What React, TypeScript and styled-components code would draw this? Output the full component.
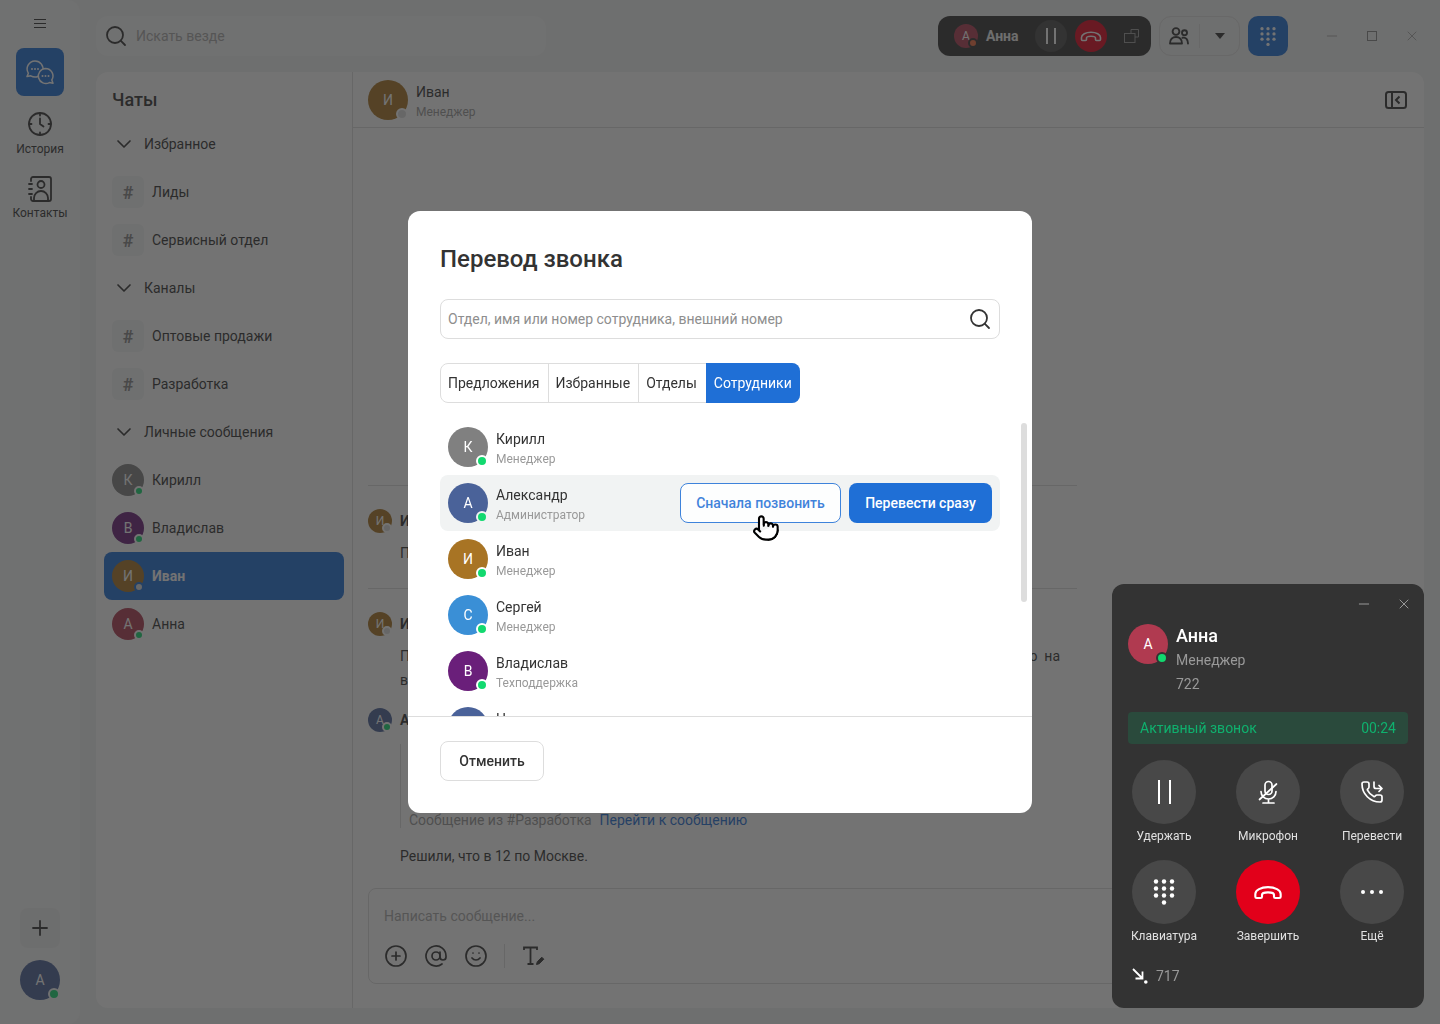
import { ReactNode } from "react"
import styled, { createGlobalStyle } from "styled-components"
import { AtSign, ChevronDown, CirclePlus, Minus, Plus, Pointer, Search, Smile, X } from "lucide-react"

const AVATAR_COLORS: Record<string, string> = {
  gray: "#808080",
  blue: "#4a6299",
  brown: "#a87424",
  sky: "#3a8fd6",
  purple: "#6a1f7a",
  red: "#b03a50",
}

const EMPLOYEES = [
  { letter: "К", name: "Кирилл", role: "Менеджер", color: "gray" },
  { letter: "А", name: "Александр", role: "Администратор", color: "blue", hovered: true },
  { letter: "И", name: "Иван", role: "Менеджер", color: "brown" },
  { letter: "С", name: "Сергей", role: "Менеджер", color: "sky" },
  { letter: "В", name: "Владислав", role: "Техподдержка", color: "purple" },
  { letter: "Н", name: "Никита", role: "Менеджер", color: "blue" },
]

const GlobalStyle = createGlobalStyle`
  html, body {
    margin: 0;
    overflow: hidden;
  }

  body {
    font-family: Roboto, "Liberation Sans", sans-serif;
    color: #333;
    background: #f0f2f2;
  }

  * {
    box-sizing: border-box;
  }
`

function HangupIcon({ size }: { size: number }) {
  return (
    <svg width={size} height={size} viewBox="0 0 24 24" fill="none" stroke="currentColor" strokeWidth="1.6" strokeLinejoin="round">
      <path d="M2.5 15.5v-2c0-2.9 4.2-5.2 9.500-5.200s9.500 2.300 9.500 5.200v2a1 1 0 0 1-1 1h-3a1 1 0 0 1-1-1v-1.400c0-1-2-1.800-4.500-1.800s-4.500.8-4.500 1.800v1.400a1 1 0 0 1-1 1h-3a1 1 0 0 1-1-1z" />
    </svg>
  )
}

function DialIcon({ width }: { width: number }) {
  const rows = [3.5, 10.5, 17.5]
  return (
    <svg width={width} height={(width * 28) / 24} viewBox="0 0 24 28" fill="currentColor">
      {rows.map((cy) =>
        [4, 12, 20].map((cx) => <circle key={`${cx}-${cy}`} cx={cx} cy={cy} r="2.200" />),
      )}
      <circle cx="12" cy="24.500" r="2.200" />
    </svg>
  )
}

function ChatsIcon() {
  return (
    <svg width="32" height="32" viewBox="0 0 32 32" fill="#1f6fd6" stroke="#fff" strokeWidth="1.5" strokeLinejoin="round">
      <path d="M11 5a8 8 0 1 1-4.200 14.800L3 20.500l1.400-3.200A8 8 0 0 1 11 5z" />
      <path d="M21.500 12.500a7.500 7.500 0 0 1 6.300 11.500l1.200 3.300-3.600-.7a7.500 7.500 0 1 1-3.900-14.100z" />
      <g fill="#fff" stroke="none">
        <circle cx="8" cy="13" r="1" />
        <circle cx="11" cy="13" r="1" />
        <circle cx="14" cy="13" r="1" />
        <circle cx="18.500" cy="20" r="1" />
        <circle cx="21.500" cy="20" r="1" />
        <circle cx="24.500" cy="20" r="1" />
      </g>
    </svg>
  )
}

function HistoryIcon() {
  return (
    <svg width="24" height="24" viewBox="0 0 24 24" fill="none" stroke="currentColor" strokeWidth="1.800" strokeLinecap="round" strokeLinejoin="round">
      <circle cx="12" cy="12" r="11" />
      <path d="M12 1v2.500M12 20.500V23M1 12h2.500M20.500 12H23M12 6.500V12l3.500 2.500" />
    </svg>
  )
}

function ContactsIcon() {
  return (
    <svg width="24" height="26" viewBox="0 0 24 26" fill="none" stroke="currentColor" strokeWidth="1.800" strokeLinecap="round">
      <path d="M3 5V3a2 2 0 0 1 2-2h16a2 2 0 0 1 2 2v20a2 2 0 0 1-2 2H5a2 2 0 0 1-2-2v-2" />
      <path d="M1 8h3M1 13h3M1 18h3" />
      <circle cx="13" cy="8.500" r="3.500" />
      <path d="M6 25v-3a7 7 0 0 1 14 0v3" />
    </svg>
  )
}

function MicMutedIcon() {
  return (
    <svg width="24" height="24" viewBox="0 0 24 24" fill="none" stroke="currentColor" strokeWidth="1.700" strokeLinecap="round">
      <rect x="9" y="1.500" width="7" height="13" rx="3.500" />
      <path d="M5 11.500a7.500 7.500 0 0 0 15 0M12.500 19v4M7 23h11" />
      <path d="M3.500 19.500L20.500 4" />
    </svg>
  )
}

function TransferIcon() {
  return (
    <svg width="24" height="24" viewBox="0 0 24 24" fill="none" stroke="currentColor" strokeWidth="1.700" strokeLinecap="round" strokeLinejoin="round">
      <path d="M13.832 16.568a1 1 0 0 0 1.213-.303l.355-.465A2 2 0 0 1 17 15h3a2 2 0 0 1 2 2v3a2 2 0 0 1-2 2A18 18 0 0 1 2 4a2 2 0 0 1 2-2h3a2 2 0 0 1 2 2v3a2 2 0 0 1-.8 1.600l-.468.351a1 1 0 0 0-.292 1.233 14 14 0 0 0 6.392 6.384" />
      <path d="M14 2v4.500a2 2 0 0 0 2 2h6M19 5.500l3 3-3 3" />
    </svg>
  )
}

function PeopleIcon() {
  return (
    <svg width="20" height="18" viewBox="0 0 20 18" fill="none" stroke="currentColor" strokeWidth="1.900" strokeLinecap="round">
      <circle cx="7" cy="4.500" r="3.400" />
      <circle cx="15.500" cy="5.800" r="2.500" />
      <path d="M1 16.500c0-4 2.400-6.500 6-6.500s6 2.500 6 6.500M13.500 10.800c3.500-.8 5.500 2 5.500 5.700M1 16.500h12" />
    </svg>
  )
}

function CopyIcon() {
  return (
    <svg width="15" height="14" viewBox="0 0 15 14" fill="none" stroke="#999" strokeWidth="1">
      <rect x="0.500" y="4.500" width="10.500" height="9" />
      <path d="M7 4.500V.5h7.500V8H11" />
    </svg>
  )
}

function IncomingIcon() {
  return (
    <svg width="16" height="16" viewBox="0 0 16 16" fill="none" stroke="#fff" strokeWidth="1.800">
      <path d="M1 1l9.500 9.500M10.500 3.500v7h-7" />
      <circle cx="13.800" cy="14" r="1.800" fill="#fff" stroke="none" />
    </svg>
  )
}

function TextStyleIcon() {
  return (
    <svg width="24" height="24" viewBox="0 0 24 24" fill="none" stroke="currentColor" strokeWidth="1.800">
      <path d="M3 6V3.500h13V6M9.500 3.500V20M6.500 20h6" />
      <path d="M15.500 20.500l.8-2.800 4.500-4.500 2 2-4.500 4.500z" fill="currentColor" strokeWidth="1" />
    </svg>
  )
}

function CollapseIcon() {
  return (
    <svg width="22" height="20" viewBox="0 0 22 20" fill="none" stroke="currentColor" strokeWidth="2">
      <rect x="1" y="2" width="20" height="16" rx="2.500" />
      <path d="M7 2v16M14.500 6.500L11 10l3.500 3.500" />
    </svg>
  )
}

function Avatar({
  letter,
  color,
  size,
  status,
  ring,
}: {
  letter: string
  color: string
  size: number
  status?: string
  ring?: string
}) {
  return (
    <AvatarCircle $size={size} $color={AVATAR_COLORS[color]}>
      {letter}
      {status && <StatusDot $size={size} $status={status} $ring={ring ?? "#fff"} />}
    </AvatarCircle>
  )
}

function SideRow({ children, selected }: { children: ReactNode; selected?: boolean }) {
  return <SideRowBox $selected={selected}>{children}</SideRowBox>
}

function CallAction({ label, icon, danger }: { label: string; icon: ReactNode; danger?: boolean }) {
  return (
    <ActionCell>
      <ActionCircle $danger={danger}>{icon}</ActionCircle>
      <ActionLabel>{label}</ActionLabel>
    </ActionCell>
  )
}

export default function App() {
  return (
    <>
      <GlobalStyle />
      <Page>
        <Rail>
          <MenuButton>
            <span />
            <span />
            <span />
          </MenuButton>
          <ChatsTile>
            <ChatsIcon />
          </ChatsTile>
          <NavItem>
            <NavIcon>
              <HistoryIcon />
            </NavIcon>
            <NavLabel>История</NavLabel>
          </NavItem>
          <NavItem>
            <NavIcon>
              <ContactsIcon />
            </NavIcon>
            <NavLabel>Контакты</NavLabel>
          </NavItem>
          <RailBottom>
            <AddTile>
              <Plus size={24} strokeWidth={1.8} />
            </AddTile>
            <Avatar letter="А" color="blue" size={40} status="online" ring="#f7f8f8" />
          </RailBottom>
        </Rail>

        <Main>
          <TopBar>
            <SearchBox>
              <Search size={24} strokeWidth={1.8} color="#333" />
              Искать везде
            </SearchBox>
            <CallPill>
              <Avatar letter="А" color="red" size={24} status="busy" ring="#333" />
              <PillName>Анна</PillName>
              <PillRound>
                <PauseBars $height={16} $gap={6} />
              </PillRound>
              <PillRound $danger>
                <HangupIcon size={24} />
              </PillRound>
              <CopySlot>
                <CopyIcon />
              </CopySlot>
            </CallPill>
            <GroupButton>
              <PeopleIcon />
              <GroupDivider />
              <Caret />
            </GroupButton>
            <DialTile>
              <DialIcon width={18} />
            </DialTile>
            <WindowControls>
              <Minus size={16} strokeWidth={1} />
              <MaxBox />
              <X size={16} strokeWidth={1} />
            </WindowControls>
          </TopBar>

          <Panel>
            <ChatList>
              <ListTitle>Чаты</ListTitle>
              <SideRow>
                <ChevronSlot><ChevronDown size={24} strokeWidth={1.7} /></ChevronSlot>
                Избранное
              </SideRow>
              <SideRow><HashTile>#</HashTile>Лиды</SideRow>
              <SideRow><HashTile>#</HashTile>Сервисный отдел</SideRow>
              <SideRow>
                <ChevronSlot><ChevronDown size={24} strokeWidth={1.7} /></ChevronSlot>
                Каналы
              </SideRow>
              <SideRow><HashTile>#</HashTile>Оптовые продажи</SideRow>
              <SideRow><HashTile>#</HashTile>Разработка</SideRow>
              <SideRow>
                <ChevronSlot><ChevronDown size={24} strokeWidth={1.7} /></ChevronSlot>
                Личные сообщения
              </SideRow>
              <SideRow><Avatar letter="К" color="gray" size={32} status="online" />Кирилл</SideRow>
              <SideRow><Avatar letter="В" color="purple" size={32} status="online" />Владислав</SideRow>
              <SideRow selected><Avatar letter="И" color="brown" size={32} status="away" ring="#1f6fd6" />Иван</SideRow>
              <SideRow><Avatar letter="А" color="red" size={32} status="online" />Анна</SideRow>
            </ChatList>

            <ChatPane>
              <ChatHeader>
                <Avatar letter="И" color="brown" size={40} status="away" />
                <PersonText>
                  <PersonName>Иван</PersonName>
                  <PersonRole>Менеджер</PersonRole>
                </PersonText>
                <HeaderAction>
                  <CollapseIcon />
                </HeaderAction>
              </ChatHeader>

              <Feed>
                <FeedDivider />
                <MessageHead>
                  <Avatar letter="И" color="brown" size={24} status="away" />
                  <MessageAuthor>Иван</MessageAuthor>
                </MessageHead>
                <MessageBody>Привет! Когда будет созвон?</MessageBody>
                <FeedDivider />
                <MessageHead>
                  <Avatar letter="И" color="brown" size={24} status="away" />
                  <MessageAuthor>Иван</MessageAuthor>
                </MessageHead>
                <MessageWide>Подскажите, пожалуйста, в какое время клиенту будет удобно созвониться и обсудить это на</MessageWide>
                <MessageBody>встрече.</MessageBody>
                <ThirdHead>
                  <Avatar letter="А" color="blue" size={24} status="online" />
                  <MessageAuthor>Александр</MessageAuthor>
                </ThirdHead>
                <Quote>
                  Сообщение из #Разработка
                  <QuoteLink>Перейти к сообщению</QuoteLink>
                </Quote>
                <MessageBody>Решили, что в 12 по Москве.</MessageBody>
              </Feed>

              <Composer>
                <ComposerHint>Написать сообщение...</ComposerHint>
                <ComposerTools>
                  <CirclePlus size={24} strokeWidth={1.7} />
                  <AtSign size={24} strokeWidth={1.7} />
                  <Smile size={24} strokeWidth={1.7} />
                  <ToolDivider />
                  <TextStyleIcon />
                </ComposerTools>
              </Composer>
            </ChatPane>
          </Panel>
        </Main>
      </Page>

      <Overlay>
        <Modal>
          <ModalTitle>Перевод звонка</ModalTitle>
          <ModalSearch>
            Отдел, имя или номер сотрудника, внешний номер
            <Search size={24} strokeWidth={1.8} color="#333" />
          </ModalSearch>
          <Tabs>
            <Tab>Предложения</Tab>
            <Tab>Избранные</Tab>
            <Tab>Отделы</Tab>
            <Tab $active>Сотрудники</Tab>
          </Tabs>
          <EmployeeList>
            {EMPLOYEES.map((person) => (
              <EmployeeRow key={person.name} $hovered={person.hovered}>
                <Avatar letter={person.letter} color={person.color} size={40} status="online" ring={person.hovered ? "#f1f3f3" : "#fff"} />
                <PersonText>
                  <PersonName>{person.name}</PersonName>
                  <PersonRole>{person.role}</PersonRole>
                </PersonText>
                {person.hovered && (
                  <RowActions>
                    <OutlineButton>Сначала позвонить</OutlineButton>
                    <SolidButton>Перевести сразу</SolidButton>
                    <HandCursor>
                      <Pointer size={28} strokeWidth={1.8} fill="#fff" color="#000" />
                    </HandCursor>
                  </RowActions>
                )}
              </EmployeeRow>
            ))}
            <ScrollThumb />
          </EmployeeList>
          <ModalFooter>
            <CancelButton>Отменить</CancelButton>
          </ModalFooter>
        </Modal>

        <CallWidget>
          <WidgetHead>
            <Minus size={16} strokeWidth={1} />
            <X size={16} strokeWidth={1} />
          </WidgetHead>
          <CallerInfo>
            <Avatar letter="А" color="red" size={40} status="online" ring="#333" />
            <CallerText>
              <CallerName>Анна</CallerName>
              <CallerMeta>Менеджер</CallerMeta>
              <CallerMeta>722</CallerMeta>
            </CallerText>
          </CallerInfo>
          <StatusBar>
            <span>Активный звонок</span>
            <span>00:24</span>
          </StatusBar>
          <ActionGrid>
            <CallAction label="Удержать" icon={<PauseBars $height={24} $gap={9} />} />
            <CallAction label="Микрофон" icon={<MicMutedIcon />} />
            <CallAction label="Перевести" icon={<TransferIcon />} />
            <CallAction label="Клавиатура" icon={<DialIcon width={24} />} />
            <CallAction label="Завершить" icon={<HangupIcon size={32} />} danger />
            <CallAction label="Ещё" icon={<MoreDots><i /><i /><i /></MoreDots>} />
          </ActionGrid>
          <WidgetFooter>
            <IncomingIcon />
            717
          </WidgetFooter>
        </CallWidget>
      </Overlay>
    </>
  )
}

const Page = styled.div`
  display: flex;
  width: 1440px;
  height: 1024px;
`

const Rail = styled.aside`
  display: flex;
  flex-direction: column;
  align-items: center;
  width: 80px;
  padding: 8px 0 24px;
  background: #f7f8f8;
  border-radius: 0 12px 12px 0;
`

const MenuButton = styled.div`
  display: flex;
  flex-direction: column;
  justify-content: center;
  gap: 3px;
  width: 12px;
  height: 30px;
  margin-bottom: 10px;

  & > span {
    height: 1px;
    background: #333;
  }
`

const ChatsTile = styled.div`
  display: flex;
  align-items: center;
  justify-content: center;
  width: 48px;
  height: 48px;
  margin-bottom: 8px;
  border-radius: 8px;
  background: #1f6fd6;
`

const NavItem = styled.div`
  display: flex;
  flex-direction: column;
  align-items: center;
  gap: 5px;
  height: 64px;
  padding-top: 8px;
  color: #333;
`

const NavIcon = styled.div`
  display: flex;
  height: 24px;
`

const NavLabel = styled.span`
  font-size: 12px;
  line-height: 16px;
`

const RailBottom = styled.div`
  display: flex;
  flex-direction: column;
  align-items: center;
  gap: 12px;
  margin-top: auto;
`

const AddTile = styled.div`
  display: flex;
  align-items: center;
  justify-content: center;
  width: 40px;
  height: 40px;
  border-radius: 8px;
  background: #eef0f0;
`

const AvatarCircle = styled.div<{ $size: number; $color: string }>`
  position: relative;
  flex: none;
  display: flex;
  align-items: center;
  justify-content: center;
  width: ${(p) => p.$size}px;
  height: ${(p) => p.$size}px;
  border-radius: 50%;
  background: ${(p) => p.$color};
  color: #fff;
  font-size: ${(p) => (p.$size > 24 ? 14 : 12)}px;
  font-weight: 400;
`

const StatusDot = styled.span<{ $size: number; $status: string; $ring: string }>`
  position: absolute;
  right: 0;
  bottom: 0;
  width: ${(p) => (p.$size >= 40 ? 12 : 10)}px;
  height: ${(p) => (p.$size >= 40 ? 12 : 10)}px;
  border: 2px solid ${(p) => p.$ring};
  border-radius: 50%;
  background: ${(p) =>
    p.$status === "online" ? "#12d96f" : p.$status === "busy" ? "#f26a3c" : "#dcdcdc"};
`

const Main = styled.main`
  flex: 1;
  display: flex;
  flex-direction: column;
  gap: 16px;
  min-width: 0;
  padding: 16px;
`

const TopBar = styled.header`
  display: flex;
  align-items: center;
  gap: 8px;
  height: 40px;
`

const SearchBox = styled.div`
  display: flex;
  align-items: center;
  gap: 8px;
  width: 450px;
  height: 40px;
  margin-right: auto;
  padding: 0 8px;
  border-radius: 12px;
  background: #f7f8f8;
  font-size: 14px;
  color: #aaa;
`

const CallPill = styled.div`
  display: flex;
  align-items: center;
  width: 213px;
  height: 40px;
  padding: 0 12px 0 16px;
  border-radius: 12px;
  background: #333;
  color: #fff;
`

const PillName = styled.span`
  width: 33px;
  margin: 0 16px 0 8px;
  font-size: 14px;
  font-weight: 700;
  color: #f0f0f0;
`

const PillRound = styled.div<{ $danger?: boolean }>`
  display: flex;
  align-items: center;
  justify-content: center;
  width: 32px;
  height: 32px;
  margin-right: 8px;
  border-radius: 50%;
  background: ${(p) => (p.$danger ? "#e2001a" : "#484848")};
  color: #fff;
`

const PauseBars = styled.div<{ $height: number; $gap: number }>`
  width: ${(p) => p.$gap + 4}px;
  height: ${(p) => p.$height}px;
  border-left: 2px solid #fff;
  border-right: 2px solid #fff;
`

const CopySlot = styled.div`
  display: flex;
  margin-left: 9px;
`

const GroupButton = styled.div`
  display: flex;
  align-items: center;
  width: 81px;
  height: 40px;
  padding-left: 9px;
  border: 1px solid #dedede;
  border-radius: 12px;
  color: #333;
`

const GroupDivider = styled.div`
  width: 1px;
  height: 24px;
  margin: 0 15px 0 10px;
  background: #dedede;
`

const Caret = styled.div`
  width: 0;
  height: 0;
  border-left: 5.500px solid transparent;
  border-right: 5.500px solid transparent;
  border-top: 6px solid #333;
`

const DialTile = styled.div`
  display: flex;
  align-items: center;
  justify-content: center;
  width: 40px;
  height: 40px;
  border-radius: 10px;
  background: #1f6fd6;
  color: #fff;
`

const WindowControls = styled.div`
  display: flex;
  align-items: center;
  gap: 24px;
  margin-left: 28px;
  padding-right: 4px;
  color: #888;
`

const MaxBox = styled.div`
  width: 10px;
  height: 10px;
  margin: 0 3px;
  border: 1px solid #888;
`

const Panel = styled.section`
  flex: 1;
  display: flex;
  min-height: 0;
  background: #fff;
  border-radius: 12px;
`

const ChatList = styled.nav`
  flex: none;
  width: 257px;
  border-right: 1px solid #ddd;
`

const ListTitle = styled.div`
  display: flex;
  align-items: center;
  height: 48px;
  padding: 7px 0 0 16px;
  font-size: 18px;
  font-weight: 500;
`

const SideRowBox = styled.div<{ $selected?: boolean }>`
  display: flex;
  align-items: center;
  gap: 8px;
  height: 48px;
  margin: 0 8px;
  padding: 0 8px;
  border-radius: 8px;
  background: ${(p) => (p.$selected ? "#1f6fd6" : "transparent")};
  color: ${(p) => (p.$selected ? "#fff" : "#333")};
  font-size: 14px;
  font-weight: ${(p) => (p.$selected ? 700 : 400)};
`

const ChevronSlot = styled.span`
  display: flex;
  width: 24px;
`

const HashTile = styled.span`
  display: flex;
  align-items: center;
  justify-content: center;
  width: 32px;
  height: 32px;
  border-radius: 6px;
  background: #f4f5f5;
  color: #888;
  font-size: 18px;
  font-weight: 700;
`

const ChatPane = styled.div`
  flex: 1;
  display: flex;
  flex-direction: column;
  min-width: 0;
  padding: 0 16px 24px 15px;
`

const ChatHeader = styled.div`
  flex: none;
  display: flex;
  align-items: center;
  gap: 8px;
  height: 56px;
  margin: 0 -16px 0 -15px;
  padding: 0 17px 0 15px;
  border-bottom: 1px solid #ddd;
`

const PersonText = styled.div`
  display: flex;
  flex-direction: column;
  gap: 4px;
  margin-top: 4px;
`

const PersonName = styled.div`
  font-size: 14px;
  line-height: 16px;
  color: #333;
`

const PersonRole = styled.div`
  font-size: 12px;
  line-height: 16px;
  color: #999;
`

const HeaderAction = styled.div`
  display: flex;
  margin-left: auto;
  color: #333;
`

const Feed = styled.div`
  flex: 1;
  display: flex;
  flex-direction: column;
  justify-content: flex-end;
  width: 709px;
  padding-bottom: 20px;
`

const FeedDivider = styled.div`
  height: 1px;
  margin-bottom: 23px;
  background: #ddd;
`

const MessageHead = styled.div`
  display: flex;
  align-items: center;
  gap: 8px;
  height: 24px;
  margin-bottom: 8px;
`

const ThirdHead = styled(MessageHead)`
  margin-top: 16px;
  margin-bottom: 12px;
`

const MessageAuthor = styled.span`
  font-size: 14px;
  font-weight: 700;
`

const MessageBody = styled.div`
  margin-left: 32px;
  font-size: 14px;
  line-height: 24px;
  color: #333;

  & + ${FeedDivider} {
    margin-top: 23px;
  }
`

const MessageWide = styled(MessageBody)`
  width: 660px;
  white-space: nowrap;
  text-align: justify;
  text-align-last: justify;
`

const Quote = styled.div`
  display: flex;
  align-items: flex-end;
  height: 84px;
  margin: 0 0 16px 32px;
  padding: 0 0 0 8px;
  border-left: 1px solid #ddd;
  font-size: 14px;
  line-height: 16px;
  color: #999;
`

const QuoteLink = styled.span`
  margin-left: 8px;
  color: #1f6fd6;
`

const Composer = styled.div`
  flex: none;
  height: 96px;
  padding: 19px 15px 0;
  border: 1px solid #ddd;
  border-radius: 8px;
`

const ComposerHint = styled.div`
  font-size: 14px;
  line-height: 16px;
  color: #aaa;
`

const ComposerTools = styled.div`
  display: flex;
  align-items: center;
  gap: 16px;
  margin-top: 20px;
  color: #333;
`

const ToolDivider = styled.div`
  width: 1px;
  height: 24px;
  background: #ddd;
`

const Overlay = styled.div`
  position: fixed;
  inset: 0;
  display: flex;
  align-items: center;
  justify-content: center;
  background: rgba(40, 40, 40, 0.65);
`

const Modal = styled.div`
  display: flex;
  flex-direction: column;
  width: 624px;
  height: 602px;
  padding-top: 32px;
  border-radius: 12px;
  background: #fff;
`

const ModalTitle = styled.h2`
  margin: 0 32px;
  font-size: 24px;
  line-height: 32px;
  font-weight: 500;
  color: #333;
`

const ModalSearch = styled.div`
  display: flex;
  align-items: center;
  justify-content: space-between;
  height: 40px;
  margin: 24px 32px 0;
  padding: 0 7px;
  border: 1px solid #ddd;
  border-radius: 8px;
  font-size: 14px;
  color: #8e8e8e;
`

const Tabs = styled.div`
  display: flex;
  align-self: flex-start;
  height: 40px;
  margin: 24px 32px 16px;
  border: 1px solid #ddd;
  border-radius: 8px;
`

const Tab = styled.div<{ $active?: boolean }>`
  display: flex;
  align-items: center;
  padding: 0 8px 0 7px;
  border-right: 1px solid #ddd;
  font-size: 14px;
  color: #333;

  &:nth-child(3) {
    border-right-color: transparent;
  }

  ${(p) =>
    p.$active &&
    `
    margin: -1px -1px -1px 0;
    padding: 0 8px;
    border: none;
    border-radius: 0 8px 8px 0;
    background: #1f6fd6;
    color: #fff;
  `}
`

const EmployeeList = styled.div`
  position: relative;
  flex: none;
  height: 297px;
  padding: 0 32px;
  overflow: hidden;
`

const EmployeeRow = styled.div<{ $hovered?: boolean }>`
  display: flex;
  align-items: center;
  gap: 8px;
  height: 56px;
  padding: 0 8px;
  border-radius: 8px;
  background: ${(p) => (p.$hovered ? "#f1f3f3" : "transparent")};
`

const RowActions = styled.div`
  position: relative;
  display: flex;
  gap: 8px;
  margin-left: auto;
`

const OutlineButton = styled.div`
  display: flex;
  align-items: center;
  justify-content: center;
  width: 161px;
  height: 40px;
  border: 1px solid #1f6fd6;
  border-radius: 8px;
  background: #fff;
  color: #1f6fd6;
  font-size: 14px;
  font-weight: 500;
  opacity: 0.85;
`

const SolidButton = styled.div`
  display: flex;
  align-items: center;
  justify-content: center;
  width: 143px;
  height: 40px;
  border-radius: 8px;
  background: #1f6fd6;
  color: #fff;
  font-size: 14px;
  font-weight: 500;
`

const HandCursor = styled.span`
  position: absolute;
  left: 72px;
  top: 31px;
  display: flex;
`

const ScrollThumb = styled.div`
  position: absolute;
  top: 4px;
  right: 5px;
  width: 6px;
  height: 179px;
  border-radius: 3px;
  background: #ddd;
`

const ModalFooter = styled.div`
  flex: 1;
  padding: 24px 32px 32px;
  border-top: 1px solid #ddd;
`

const CancelButton = styled.div`
  display: flex;
  align-items: center;
  justify-content: center;
  width: 104px;
  height: 40px;
  border: 1px solid #ddd;
  border-radius: 8px;
  font-size: 14px;
  font-weight: 500;
  color: #333;
`

const CallWidget = styled.div`
  position: absolute;
  right: 16px;
  bottom: 16px;
  width: 312px;
  height: 424px;
  padding: 0 16px;
  border-radius: 12px;
  background: #333;
  color: #fff;
`

const WidgetHead = styled.div`
  display: flex;
  align-items: center;
  justify-content: flex-end;
  gap: 24px;
  height: 40px;
  margin-right: -4px;
  color: #ccc;
`

const CallerInfo = styled.div`
  display: flex;
  gap: 8px;
`

const CallerText = styled.div`
  display: flex;
  flex-direction: column;
`

const CallerName = styled.div`
  font-size: 18px;
  line-height: 24px;
  font-weight: 500;
  color: #fff;
`

const CallerMeta = styled.div`
  font-size: 14px;
  line-height: 24px;
  color: #999;
`

const StatusBar = styled.div`
  display: flex;
  align-items: center;
  justify-content: space-between;
  height: 32px;
  margin: 16px 0;
  padding: 0 12px;
  border-radius: 4px;
  background: #2a4a3c;
  color: #0fb16e;
  font-size: 14px;
`

const ActionGrid = styled.div`
  display: grid;
  grid-template-columns: repeat(3, 72px);
  column-gap: 32px;
  row-gap: 16px;
`

const ActionCell = styled.div`
  display: flex;
  flex-direction: column;
  align-items: center;
  gap: 4px;
`

const ActionCircle = styled.div<{ $danger?: boolean }>`
  display: flex;
  align-items: center;
  justify-content: center;
  width: 64px;
  height: 64px;
  border-radius: 50%;
  background: ${(p) => (p.$danger ? "#e2001a" : "#484848")};
  color: #fff;
`

const ActionLabel = styled.span`
  font-size: 12px;
  line-height: 16px;
  color: #e0e0e0;
  white-space: nowrap;
`

const MoreDots = styled.div`
  display: flex;
  gap: 5px;

  & > i {
    width: 4px;
    height: 4px;
    border-radius: 50%;
    background: #fff;
  }
`

const WidgetFooter = styled.div`
  display: flex;
  align-items: center;
  gap: 8px;
  height: 24px;
  margin: 20px 0 0 4px;
  font-size: 14px;
  color: #999;
`
